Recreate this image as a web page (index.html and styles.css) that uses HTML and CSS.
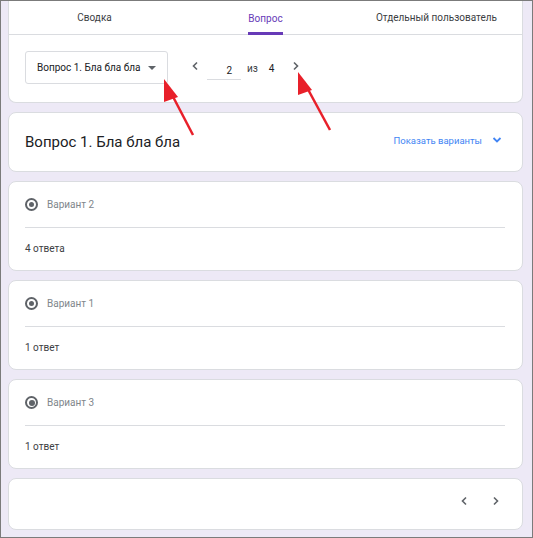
FILE: index.html
```html
<!DOCTYPE html>
<html lang="ru">
<head>
  <meta charset="UTF-8" />
  <title>Ответы | Вопрос</title>
  <link rel="stylesheet" href="styles.css">
</head>
<body>
  <div class="frame">
    <div class="card top-card">
      <div class="tabs">
        <div class="tab"><span>Сводка</span></div>
        <div class="tab active"><span>Вопрос</span></div>
        <div class="tab"><span>Отдельный пользователь</span></div>
      </div>
      <div class="controls">
        <div class="select">
          <span>Вопрос 1. Бла бла бла</span>
          <span class="caret"></span>
        </div>
        <div class="pager">
          <svg class="chev" width="8" height="10" viewBox="0 0 8 10"><path d="M6 1.5 L2.5 5 L6 8.5" /></svg>
          <div class="page-input">2</div>
          <span class="of">из</span>
          <span class="total">4</span>
          <svg class="chev" width="8" height="10" viewBox="0 0 8 10"><path d="M2 1.5 L5.5 5 L2 8.5" /></svg>
        </div>
      </div>
    </div>

    <div class="card title-card">
      <div class="q-title">Вопрос 1. Бла бла бла</div>
      <div class="show-opts">
        <span>Показать варианты</span>
        <svg width="10" height="8" viewBox="0 0 10 8"><path d="M1.5 2 L5 5.5 L8.5 2" /></svg>
      </div>
    </div>

    <div class="card option">
      <div class="opt-head">
        <span class="radio"></span>
        <span class="opt-name">Вариант 2</span>
      </div>
      <div class="opt-count">4 ответа</div>
    </div>

    <div class="card option">
      <div class="opt-head">
        <span class="radio"></span>
        <span class="opt-name">Вариант 1</span>
      </div>
      <div class="opt-count">1 ответ</div>
    </div>

    <div class="card option">
      <div class="opt-head">
        <span class="radio big"></span>
        <span class="opt-name">Вариант 3</span>
      </div>
      <div class="opt-count">1 ответ</div>
    </div>

    <div class="card bottom-card">
      <svg class="chev" width="8" height="10" viewBox="0 0 8 10"><path d="M6 1.5 L2.5 5 L6 8.5" /></svg>
      <svg class="chev" width="8" height="10" viewBox="0 0 8 10"><path d="M2 1.5 L5.5 5 L2 8.5" /></svg>
    </div>

    <!-- red annotation arrows -->
    <svg class="arrows" width="531" height="536" viewBox="0 0 531 536">
      <line x1="192" y1="134" x2="168" y2="88" />
      <polygon points="163,78 177,96 163,101" />
      <line x1="329" y1="129" x2="303" y2="81" />
      <polygon points="297,71 311,89 297,94" />
    </svg>
  </div>
</body>
</html>
```

FILE: styles.css
```css
* {
  box-sizing: border-box;
}

body {
  margin: 0;
  font-family: Roboto, 'Noto Sans', sans-serif;
  color: #202124;
}

.frame {
  position: relative;
  width: 533px;
  height: 538px;
  border: 1px solid #7b7b7b;
  background: #ede9f6;
  padding: 0 9px 0 7px;
  overflow: hidden;
}

.card {
  background: #fff;
  border: 1px solid #dadce0;
  border-radius: 8px;
  margin-bottom: 9px;
}

/* Top card with tabs */
.top-card {
  border-top: none;
  border-radius: 0 0 8px 8px;
  height: 102px;
}

.tabs {
  display: grid;
  grid-template-columns: 1fr 1fr 1fr;
  height: 34px;
  border-bottom: 1px solid #dadce0;
}

.tab {
  display: flex;
  justify-content: center;
  align-items: center;
  font-size: 10px;
  color: #3c4043;
}

.tab span {
  height: 33px;
  line-height: 33px;
}

.tab.active span {
  color: #673ab7;
  border-bottom: 3px solid #673ab7;
  margin-bottom: -1px;
}

.controls {
  display: flex;
  align-items: center;
  padding: 16px 16px 0 16px;
}

.select {
  display: flex;
  align-items: center;
  justify-content: space-between;
  width: 143px;
  height: 33px;
  border: 1px solid #dadce0;
  border-radius: 3px;
  padding: 0 11px;
  font-size: 10px;
  color: #202124;
}

.caret {
  width: 0;
  height: 0;
  border-left: 4px solid transparent;
  border-right: 4px solid transparent;
  border-top: 4px solid #5f6368;
}

.pager {
  display: flex;
  align-items: center;
  margin-left: 23px;
  margin-top: -3px;
  font-size: 10px;
}

.chev path {
  fill: none;
  stroke: #5f6368;
  stroke-width: 1.6;
}

.page-input {
  width: 34px;
  margin-left: 8px;
  padding: 6px 9px 3px 0;
  text-align: right;
  border-bottom: 1px solid #dadce0;
  margin-top: 7px;
}

.of {
  margin-left: 6px;
  color: #3c4043;
  margin-top: 4px;
}

.total {
  margin-left: 11px;
  margin-top: 4px;
}

.pager .chev:last-child {
  margin-left: 18px;
}

/* Question title */
.title-card {
  height: 60px;
  display: flex;
  align-items: center;
  justify-content: space-between;
  padding: 0 20px 0 16px;
}

.q-title {
  font-size: 15px;
  color: #202124;
}

.show-opts {
  display: flex;
  align-items: center;
  gap: 10px;
  font-size: 9.5px;
  color: #4285f4;
  margin-top: -4px;
}

.show-opts path {
  fill: none;
  stroke: #4285f4;
  stroke-width: 1.8;
}

/* Option cards */
.option {
  height: 90px;
  padding: 0 16px;
}

.opt-head {
  display: flex;
  align-items: center;
  height: 46px;
  border-bottom: 1px solid #dadce0;
  margin-right: 1px;
}

.radio {
  width: 13px;
  height: 13px;
  border: 2px solid #5f6368;
  border-radius: 50%;
  display: flex;
  align-items: center;
  justify-content: center;
  margin-right: 9px;
}

.radio::after {
  content: "";
  width: 5px;
  height: 5px;
  border-radius: 50%;
  background: #5f6368;
}

.radio.big::after {
  width: 6px;
  height: 6px;
}

.opt-name {
  font-size: 10px;
  color: #80868b;
}

.opt-count {
  height: 41px;
  display: flex;
  align-items: center;
  font-size: 10px;
  color: #3c4043;
  padding-bottom: 1px;
}

/* Bottom navigation card */
.bottom-card {
  height: 52px;
  display: flex;
  justify-content: flex-end;
  align-items: center;
  gap: 24px;
  padding: 0 22px 6px 0;
}

.arrows {
  position: absolute;
  left: 0;
  top: 0;
  pointer-events: none;
}

.arrows line {
  stroke: #e8202a;
  stroke-width: 2.5;
}

.arrows polygon {
  fill: #e8202a;
}
```
